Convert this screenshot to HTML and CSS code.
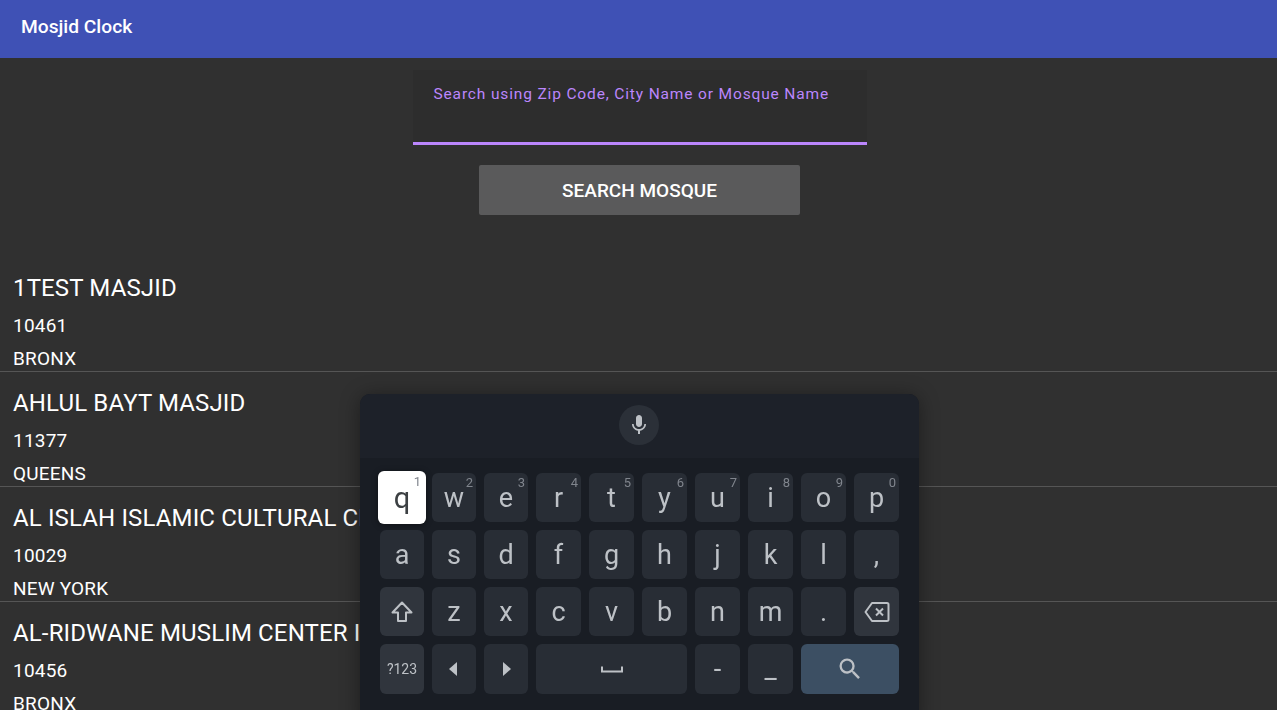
FILE: index.html
```html
<!DOCTYPE html>
<html lang="en">

<head>
  <meta charset="UTF-8">
  <meta name="viewport" content="width=device-width, initial-scale=1.0">
  <title>Mosjid Clock</title>
  <link rel="stylesheet" href="styles.css">
</head>

<body>
  <header class="app-bar">Mosjid Clock</header>

  <main class="content">
    <div class="search-form">
      <div class="search-field">
        <label class="search-label" for="searchInput">Search using Zip Code, City Name or Mosque Name</label>
        <input type="text" id="searchInput" class="search-input">
      </div>
      <button type="button" class="search-btn">SEARCH MOSQUE</button>
    </div>

    <ul class="mosque-list">
      <li class="mosque">
        <div class="mosque-name">1TEST MASJID</div>
        <div class="mosque-line">10461</div>
        <div class="mosque-line">BRONX</div>
      </li>
      <li class="mosque">
        <div class="mosque-name">AHLUL BAYT MASJID</div>
        <div class="mosque-line">11377</div>
        <div class="mosque-line">QUEENS</div>
      </li>
      <li class="mosque">
        <div class="mosque-name">AL ISLAH ISLAMIC CULTURAL CENTER</div>
        <div class="mosque-line">10029</div>
        <div class="mosque-line">NEW YORK</div>
      </li>
      <li class="mosque">
        <div class="mosque-name">AL-RIDWANE MUSLIM CENTER INC</div>
        <div class="mosque-line">10456</div>
        <div class="mosque-line">BRONX</div>
      </li>
    </ul>
  </main>

  <!-- on-screen keyboard -->
  <div class="keyboard">
    <div class="kb-top">
      <span class="mic-btn">
        <svg width="24" height="24" viewBox="0 0 24 24"><path fill="#bdc1c6" d="M12 14c1.660 0 3-1.340 3-3V5c0-1.660-1.340-3-3-3S9 3.340 9 5v6c0 1.660 1.340 3 3 3zm5.300-3c0 3-2.540 5.100-5.300 5.100S6.700 14 6.700 11H5c0 3.410 2.720 6.230 6 6.720V21h2v-3.280c3.280-.48 6-3.300 6-6.720h-1.700z"/></svg>
      </span>
    </div>
    <div class="kb-keys">
      <span class="key key-active">q<sup class="hint">1</sup></span>
      <span class="key">w<sup class="hint">2</sup></span>
      <span class="key">e<sup class="hint">3</sup></span>
      <span class="key">r<sup class="hint">4</sup></span>
      <span class="key">t<sup class="hint">5</sup></span>
      <span class="key">y<sup class="hint">6</sup></span>
      <span class="key">u<sup class="hint">7</sup></span>
      <span class="key">i<sup class="hint">8</sup></span>
      <span class="key">o<sup class="hint">9</sup></span>
      <span class="key">p<sup class="hint">0</sup></span>

      <span class="key">a</span>
      <span class="key">s</span>
      <span class="key">d</span>
      <span class="key">f</span>
      <span class="key">g</span>
      <span class="key">h</span>
      <span class="key">j</span>
      <span class="key">k</span>
      <span class="key">l</span>
      <span class="key">,</span>

      <span class="key key-fn">
        <svg width="24" height="24" viewBox="0 0 24 24"><path fill="none" stroke="#bdc1c6" stroke-width="2" stroke-linejoin="round" d="M12 2.500 2.500 12.500H8v8.500h8v-8.500h5.500z"/></svg>
      </span>
      <span class="key">z</span>
      <span class="key">x</span>
      <span class="key">c</span>
      <span class="key">v</span>
      <span class="key">b</span>
      <span class="key">n</span>
      <span class="key">m</span>
      <span class="key">.</span>
      <span class="key key-fn">
        <svg width="26" height="22" viewBox="0 0 26 22"><path fill="none" stroke="#bdc1c6" stroke-width="2" stroke-linejoin="round" d="M8 2h15a1.500 1.500 0 0 1 1.500 1.500v15A1.500 1.500 0 0 1 23 20H8L1.500 11z"/><path fill="none" stroke="#bdc1c6" stroke-width="2" d="m12 7.500 7 7m0-7-7 7"/></svg>
      </span>

      <span class="key key-fn key-sym">?123</span>
      <span class="key">
        <svg width="12" height="16" viewBox="0 0 12 16"><path fill="#bdc1c6" d="M9 1v14L1 8z"/></svg>
      </span>
      <span class="key">
        <svg width="12" height="16" viewBox="0 0 12 16"><path fill="#bdc1c6" d="M3 1v14l8-7z"/></svg>
      </span>
      <span class="key key-space">
        <svg width="24" height="10" viewBox="0 0 24 10"><path fill="none" stroke="#bdc1c6" stroke-width="2" d="M2 2.500v5h20v-5"/></svg>
      </span>
      <span class="key">-</span>
      <span class="key">_</span>
      <span class="key key-search">
        <svg width="28" height="28" viewBox="0 0 24 24"><path fill="#bdc1c6" d="M15.500 14h-.79l-.28-.27A6.470 6.470 0 0 0 16 9.500 6.500 6.500 0 1 0 9.500 16c1.610 0 3.090-.59 4.230-1.570l.27.28v.79l5 4.990L20.490 19l-4.990-5zm-6 0C7.010 14 5 11.990 5 9.500S7.010 5 9.500 5 14 7.010 14 9.500 11.990 14 9.500 14z"/></svg>
      </span>
    </div>
  </div>
</body>

</html>
```

FILE: styles.css
```css
* {
  box-sizing: border-box;
}

html,
body {
  height: 100%;
}

body {
  margin: 0;
  overflow: hidden;
  position: relative;
  background: #303030;
  color: #fff;
  font-family: Roboto, "Noto Sans", sans-serif;
}

.app-bar {
  height: 58px;
  padding: 16px 21px 0;
  background: #3f51b5;
  font-size: 19.2px;
  font-weight: 500;
  line-height: 22px;
}

.search-form {
  display: flex;
  flex-direction: column;
  align-items: center;
  padding: 12px 0 0 2px;
}

.search-field {
  position: relative;
  width: 454px;
  height: 75px;
  background: #2d2d2d;
  border-bottom: 3px solid #bb86fc;
}

.search-label {
  position: absolute;
  left: 21px;
  top: 16px;
  color: #bb86fc;
  font-size: 15.5px;
  letter-spacing: 0.85px;
  line-height: 17px;
}

.search-input {
  width: 100%;
  height: 100%;
  background: none;
  border: none;
  outline: none;
}

.search-btn {
  width: 321px;
  height: 50px;
  margin-top: 20px;
  background: #5a5a5b;
  color: #fff;
  border: none;
  border-radius: 2px;
  font-family: inherit;
  font-size: 19px;
  font-weight: 500;
}

.mosque-list {
  list-style: none;
  margin: 42px 0 0;
  padding: 0;
}

.mosque {
  height: 115px;
  padding: 12px 0 0 13px;
  border-bottom: 1px solid #555;
}

.mosque-name {
  height: 40px;
  font-size: 24px;
  letter-spacing: 0.14px;
  line-height: 38px;
  white-space: nowrap;
}

.mosque-line {
  height: 33px;
  font-size: 19px;
  letter-spacing: 0.2px;
  line-height: 33px;
}

.keyboard {
  position: absolute;
  left: 360px;
  top: 394px;
  width: 559px;
  height: 330px;
  background: #191d24;
  border-radius: 10px 10px 0 0;
  box-shadow: 0 2px 20px rgba(0, 0, 0, 0.4);
  will-change: transform;
}

.kb-top {
  display: flex;
  justify-content: center;
  align-items: center;
  height: 64px;
  padding: 0 2px 2px 0;
  background: #1d2129;
  border-radius: 10px 10px 0 0;
}

.mic-btn {
  display: flex;
  justify-content: center;
  align-items: center;
  width: 40px;
  height: 40px;
  border-radius: 50%;
  background: #2b3038;
}

.kb-keys {
  display: grid;
  grid-template-columns: repeat(3, 44px) repeat(7, 45px);
  grid-template-rows: repeat(3, 49px) 50px;
  gap: 8px;
  padding: 15px 20px 0;
}

.key {
  position: relative;
  display: flex;
  justify-content: center;
  align-items: center;
  background: #282d35;
  border-radius: 6px;
  color: #bdc1c6;
  font-size: 27px;
}

.key-fn {
  background: #30353d;
}

.key-sym {
  font-size: 14px;
}

.key-space {
  grid-column: span 3;
}

.key-search {
  grid-column: span 2;
  background: #3c4f63;
}

.key-active {
  margin: -2px;
  background: #fff;
  color: #3c4043;
  font-size: 29px;
  box-shadow: 0 1px 6px rgba(0, 0, 0, 0.4);
}

.hint {
  position: absolute;
  top: 2px;
  right: 3px;
  color: #80858d;
  font-size: 13px;
  line-height: 15px;
}

.key-active .hint {
  top: 3px;
  right: 5px;
}
```
